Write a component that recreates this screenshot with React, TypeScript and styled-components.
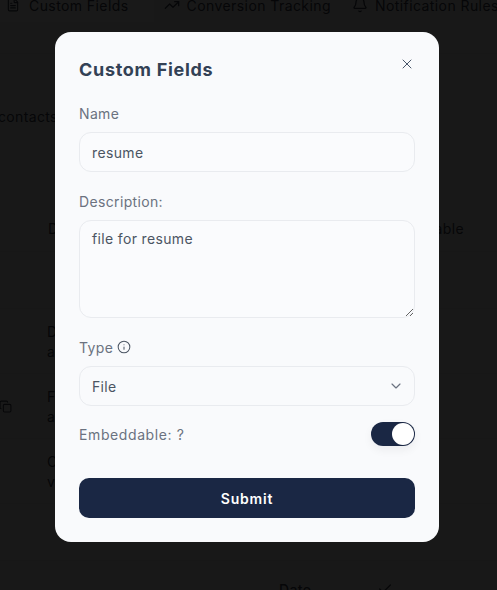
import React from 'react'
import styled, { createGlobalStyle } from 'styled-components'
import { Check, ChevronDown, Copy, FileText, Info, TrendingUp, Bell, X } from 'lucide-react'

const GlobalStyle = createGlobalStyle`
  html, body {
    margin: 0;
    padding: 0;
    height: 100%;
    overflow: hidden;
    background: #f6f6f6;
    font-family: 'Inter', 'Liberation Sans', sans-serif;
    letter-spacing: 0.35px;
  }
  * {
    box-sizing: border-box;
  }
`

const rows = [
  { height: 57, first: '', second: '' },
  { height: 65, first: 'D', second: 'a' },
  { height: 65, first: 'F', second: 'a' },
  { height: 65, first: 'C', second: 'v' }
]

const App: React.FC = () => {
  return (
    <>
      <GlobalStyle />
      <Page>
        <Tabs>
          <Tab $active>
            <FileText size={14} />
            Custom Fields
          </Tab>
          <Tab>
            <TrendingUp size={16} />
            Conversion Tracking
          </Tab>
          <Tab>
            <Bell size={16} />
            Notification Rules
          </Tab>
        </Tabs>
        <Intro>contacts</Intro>
        <HeaderRow>
          <span>D</span>
          <span>able</span>
        </HeaderRow>
        {rows.map((row, i) => (
          <Row key={i} $height={row.height}>
            <RowIcon>{row.first === 'F' && <Copy size={13} />}</RowIcon>
            <RowText>
              <span>{row.first}</span>
              <span>{row.second}</span>
            </RowText>
          </Row>
        ))}
        <Row $height={57} />
        <DateRow>
          <span>Date</span>
          <Check size={16} />
        </DateRow>
      </Page>
      <Overlay>
        <Modal>
          <ModalHeader>
            <Title>Custom Fields</Title>
            <CloseButton aria-label="Close">
              <X size={16} strokeWidth={1.5} />
            </CloseButton>
          </ModalHeader>
          <Field>
            <Label>Name</Label>
            <Input defaultValue="resume" />
          </Field>
          <Field>
            <Label>Description:</Label>
            <TextArea defaultValue="file for resume" />
          </Field>
          <Field>
            <Label>
              Type
              <Info size={14} strokeWidth={1.75} />
            </Label>
            <SelectBox>
              File
              <ChevronDown size={16} strokeWidth={1.75} />
            </SelectBox>
          </Field>
          <ToggleRow>
            <ToggleLabel>Embeddable: ?</ToggleLabel>
            <Toggle>
              <Knob />
            </Toggle>
          </ToggleRow>
          <SubmitButton>Submit</SubmitButton>
        </Modal>
      </Overlay>
    </>
  )
}

const Page = styled.div`
  width: 497px;
  height: 590px;
  overflow: hidden;
  color: #3c4350;
  font-size: 14px;
`
const Tabs = styled.div`
  height: 54px;
  display: flex;
  align-items: flex-start;
  border-bottom: 1px solid #e8e8e8;
`
const Tab = styled.div<{ $active?: boolean }>`
  height: 22px;
  padding: ${(p) => (p.$active ? '0 25px 12px 6px' : '0 11px 12px 10px')};
  display: flex;
  align-items: center;
  gap: ${(p) => (p.$active ? '9px' : '7px')};
  white-space: nowrap;
  font-size: 14px;
  letter-spacing: 0.42px;
  background: ${(p) => (p.$active ? '#ffffff' : 'transparent')};
`
const Intro = styled.div`
  height: 150px;
  padding-top: 54px;
  margin-left: -2px;
  font-size: 14px;
`
const HeaderRow = styled.div`
  height: 48px;
  padding: 16px 33px 0 48px;
  display: flex;
  justify-content: space-between;
  border-bottom: 1px solid #e8e8e8;
`
const Row = styled.div<{ $height: number }>`
  height: ${(p) => p.$height}px;
  display: flex;
  align-items: center;
  border-bottom: 1px solid #e8e8e8;
`
const RowIcon = styled.div`
  width: 48px;
  margin-left: -1px;
  display: flex;
`
const RowText = styled.div`
  display: flex;
  flex-direction: column;
  gap: 3px;
`
const DateRow = styled.div`
  padding: 20px 0 0 279px;
  display: flex;
  gap: 66px;
  font-weight: 500;
`
const Overlay = styled.div`
  position: fixed;
  inset: 0;
  padding: 32px 0 0 55px;
  background: rgba(0, 0, 0, 0.9);
`
const Modal = styled.div`
  width: 384px;
  height: 510px;
  padding: 24px;
  background: #f9fafc;
  border-radius: 16px;
  display: flex;
  flex-direction: column;
`
const ModalHeader = styled.div`
  height: 30px;
  margin-bottom: 17px;
  display: flex;
  justify-content: space-between;
  align-items: flex-start;
`
const Title = styled.h2`
  margin: 0;
  padding-top: 3px;
  font-size: 18px;
  line-height: 22px;
  font-weight: 700;
  letter-spacing: 0.7px;
  color: #334155;
`
const CloseButton = styled.button`
  width: 16px;
  height: 16px;
  padding: 0;
  border: 0;
  background: none;
  color: #475569;
  display: flex;
`
const Field = styled.div`
  margin-bottom: 19px;
`
const Label = styled.label`
  height: 20px;
  margin-bottom: 9px;
  display: flex;
  align-items: center;
  gap: 4px;
  font-size: 14px;
  color: #6b7280;
  svg {
    color: #4b5563;
  }
`
const Input = styled.input`
  display: block;
  width: 100%;
  height: 40px;
  padding: 0 12px;
  border: 1px solid #e9ebef;
  border-radius: 12px;
  background: #fafbfd;
  font: inherit;
  font-size: 14px;
  letter-spacing: inherit;
  color: #4b5563;
  outline: none;
`
const TextArea = styled.textarea`
  display: block;
  width: 100%;
  height: 98px;
  padding: 8px 12px;
  border: 1px solid #e9ebef;
  border-radius: 12px;
  background: #fafbfd;
  font: inherit;
  font-size: 14px;
  line-height: 20px;
  letter-spacing: inherit;
  color: #4b5563;
  outline: none;
  resize: vertical;
`
const SelectBox = styled.div`
  height: 40px;
  padding: 0 10px 0 12px;
  border: 1px solid #e9ebef;
  border-radius: 12px;
  display: flex;
  align-items: center;
  justify-content: space-between;
  font-size: 14px;
  color: #4b5563;
  svg {
    color: #6b7280;
  }
`
const ToggleRow = styled.div`
  height: 24px;
  margin-top: -3px;
  display: flex;
  align-items: center;
  justify-content: space-between;
`
const ToggleLabel = styled.span`
  font-size: 14px;
  letter-spacing: 0.6px;
  color: #6b7280;
`
const Toggle = styled.div`
  width: 44px;
  height: 24px;
  padding: 1px;
  border-radius: 12px;
  background: #1a2744;
  box-shadow: 0 4px 10px rgba(15, 23, 42, 0.06);
  display: flex;
  justify-content: flex-end;
`
const Knob = styled.div`
  width: 22px;
  height: 22px;
  border-radius: 50%;
  background: #ffffff;
`
const SubmitButton = styled.button`
  height: 40px;
  margin-top: 32px;
  border: 0;
  border-radius: 10px;
  background: #1a2744;
  color: #ffffff;
  font: inherit;
  font-size: 14px;
  font-weight: 600;
  letter-spacing: 0.8px;
  cursor: pointer;
`

export default App
